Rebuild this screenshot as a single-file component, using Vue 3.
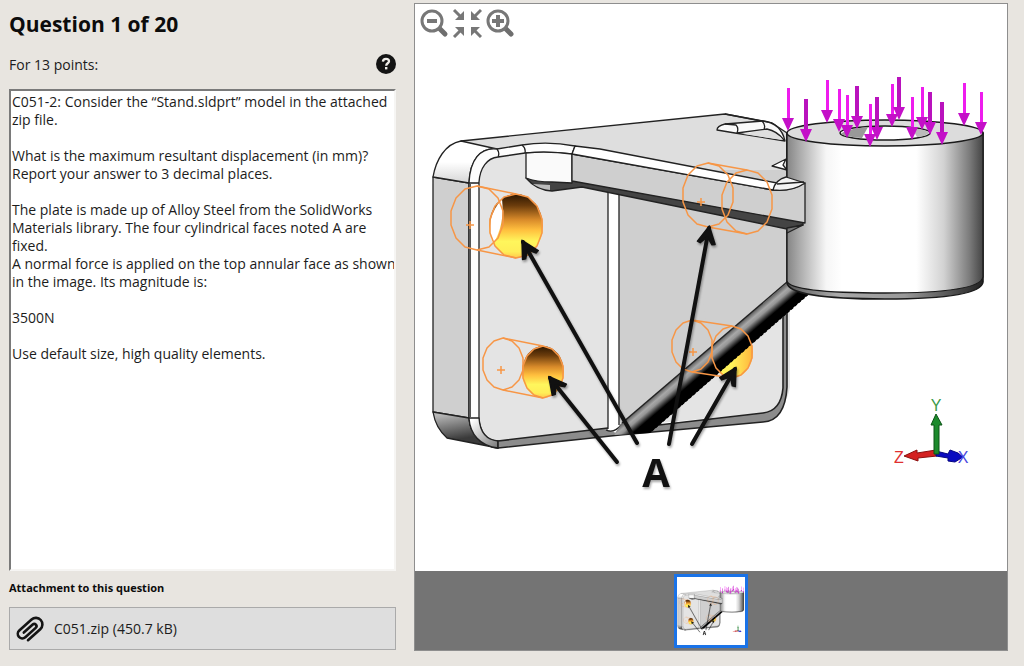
<script setup>
import { computed, ref } from 'vue'

const question = {
  number: 1,
  total: 20,
  points: 13,
  text: [
    'C051-2: Consider the “Stand.sldprt” model in the attached',
    'zip file.',
    '',
    'What is the maximum resultant displacement (in mm)?',
    'Report your answer to 3 decimal places.',
    '',
    'The plate is made up of Alloy Steel from the SolidWorks',
    'Materials library. The four cylindrical faces noted A are',
    'fixed.',
    'A normal force is applied on the top annular face as shown',
    'in the image. Its magnitude is:',
    '',
    '3500N',
    '',
    'Use default size, high quality elements.',
  ].join('\n'),
  attachment: 'C051.zip (450.7 kB)',
}

// x, top of the shaft, drawn in the darker shade
const forces = [
  [827, 80, false],
  [964, 83, false],
  [892, 84, false],
  [899, 77, true],
  [857, 86, true],
  [788, 88, false],
  [839, 89, false],
  [922, 87, false],
  [847, 95, false],
  [930, 92, true],
  [981, 92, false],
  [912, 97, false],
  [877, 97, true],
  [806, 99, true],
  [942, 102, true],
  [870, 104, false],
]

// wireframe cylinders: back centre, front centre, radii, cross
const fixtures = [
  { back: [477, 218], front: [516, 226], rx: 27, ry: 32, cross: [470, 225] },
  { back: [503, 364], front: [543, 372], rx: 21, ry: 26, cross: [501, 370] },
  { back: [708, 195], front: [747, 202], rx: 26, ry: 32, cross: [701, 202] },
  { back: [692, 346], front: [732, 352], rx: 21, ry: 26, cross: [693, 352] },
]

const callouts = [
  [637, 443, 523, 242],
  [617, 462, 550, 378],
  [669, 444, 709, 228],
  [692, 444, 735, 369],
]

function ring([cx, cy], rx, ry) {
  const points = []
  for (let i = 0; i < 14; i++) {
    const a = (i / 14) * Math.PI * 2 - Math.PI / 2
    points.push(`${Math.round(cx + rx * Math.cos(a))},${Math.round(cy + ry * Math.sin(a))}`)
  }
  return points.join(' ')
}

const scale = ref(1)
const viewBox = computed(() => {
  const w = 592 / scale.value
  const h = 567 / scale.value
  return `${711 - w / 2} ${287.5 - h / 2} ${w} ${h}`
})

function zoom(factor) {
  scale.value = Math.min(4, Math.max(0.5, scale.value * factor))
}
</script>

<template>
  <main class="page">
    <section class="question">
      <h1>Question {{ question.number }} of {{ question.total }}</h1>
      <div class="points">
        <label for="question-text">For {{ question.points }} points:</label>
        <button type="button" class="help" aria-label="Help">
          <svg viewBox="0 0 20 20" width="20" height="20">
            <circle cx="10" cy="10" r="10" fill="#141414" />
            <path
              d="M6.900 7.600C7 5.700 8.200 4.800 10 4.800S13 5.800 13 7.300C13 9.300 10.200 9.300 10.200 11.700"
              fill="none"
              stroke="#f0eeea"
              stroke-width="2.300"
            />
            <rect x="9" y="13" width="2.400" height="2.400" fill="#f0eeea" />
          </svg>
        </button>
      </div>
      <textarea id="question-text" class="text" readonly :value="question.text"></textarea>
      <h2>Attachment to this question</h2>
      <button type="button" class="attachment">
        <svg viewBox="0 0 30 30" width="30" height="30">
          <path
            d="M22 24V7.500A6.500 6.500 0 0 0 9 7.500V24A4.500 4.500 0 0 0 18 24V10A2 2 0 0 0 13.500 10V22"
            transform="rotate(48 15 15)"
            fill="none"
            stroke="#141414"
            stroke-width="2.600"
            stroke-linecap="round"
          />
        </svg>
        <span>{{ question.attachment }}</span>
      </button>
    </section>

    <section class="viewer">
      <div class="stage">
        <svg class="drawing" :viewBox="viewBox" role="img" aria-label="Stand model with loads and fixtures">
          <defs>
            <linearGradient id="barrel">
              <stop offset="0" stop-color="#858585" />
              <stop offset="0.060" stop-color="#a8a8a8" />
              <stop offset="0.200" stop-color="#f6f6f6" />
              <stop offset="0.280" stop-color="#fff" />
              <stop offset="0.660" stop-color="#fff" />
              <stop offset="0.800" stop-color="#d2d2d2" />
              <stop offset="0.930" stop-color="#7c7c7c" />
              <stop offset="1" stop-color="#444" />
            </linearGradient>
            <linearGradient id="barrel-foot">
              <stop offset="0" stop-color="#555" />
              <stop offset="0.250" stop-color="#aaa" />
              <stop offset="0.600" stop-color="#999" />
              <stop offset="1" stop-color="#222" />
            </linearGradient>
            <linearGradient id="bore" x1="0" y1="0" x2="0" y2="1">
              <stop offset="0" stop-color="#2c1600" />
              <stop offset="0.180" stop-color="#6b3c0c" />
              <stop offset="0.400" stop-color="#d88a2a" />
              <stop offset="0.560" stop-color="#ffbf3e" />
              <stop offset="0.740" stop-color="#fff65c" />
              <stop offset="0.900" stop-color="#ffee58" />
              <stop offset="1" stop-color="#ffc84a" />
            </linearGradient>
            <linearGradient id="bore-lit">
              <stop offset="0.500" stop-color="#fff35a" />
              <stop offset="1" stop-color="#ffb43c" />
            </linearGradient>
            <linearGradient id="corner-top" x1="0" y1="0" x2="0" y2="1">
              <stop offset="0.500" stop-color="#fff" />
              <stop offset="1" stop-color="#d6d6d6" />
            </linearGradient>
            <linearGradient id="corner-foot" x1="0" y1="0" x2="0.300" y2="1">
              <stop offset="0.100" stop-color="#b8b8b8" />
              <stop offset="0.800" stop-color="#3a3a3a" />
            </linearGradient>
            <linearGradient id="rim" x1="0" y1="0" x2="1" y2="1">
              <stop offset="0.100" stop-color="#fff" />
              <stop offset="1" stop-color="#777" />
            </linearGradient>
            <linearGradient id="strut" gradientUnits="userSpaceOnUse" x1="700" y1="356" x2="717" y2="376">
              <stop offset="0" stop-color="#555" />
              <stop offset="0.200" stop-color="#a8a8a8" />
              <stop offset="0.320" stop-color="#959595" />
              <stop offset="0.520" stop-color="#222" />
              <stop offset="0.580" stop-color="#000" />
            </linearGradient>
            <marker
              id="callout-head"
              markerUnits="userSpaceOnUse"
              viewBox="-20 -11 22 22"
              markerWidth="22"
              markerHeight="22"
              refX="-2"
              refY="0"
              orient="auto"
            >
              <path d="M0 0L-17 -9L-18 -6L-11 0L-18 6L-17 9Z" fill="#111" stroke="#111" stroke-width="1.500" stroke-linejoin="round" />
            </marker>
          </defs>

          <g id="stand" stroke-linejoin="round">
            <!-- plate -->
            <g stroke="#222" stroke-width="1.300">
              <path d="M461 141L725 114L772 123L787 133V390L620 420L480 180Z" fill="#dedede" />
              <path d="M433 177L469 183V418L433 412Z" fill="#cfcfcf" />
              <path d="M433 177C436 160 445 144 461 141L497 149C480 147 470 160 469 183Z" fill="url(#corner-top)" />
              <path d="M433 412L469 418C470 433 480 445 498 448L447 438C439 431 435 424 433 412Z" fill="url(#corner-foot)" />
              <path
                d="M479 418V182C480 168 488 158 498 157L525 153H572L790 190V387C787 404 779 412 763 413L608 428L498 441C487 440 480 433 479 418Z"
                fill="#e4e4e4"
                stroke="none"
              />
              <path d="M619 170H787V283L620 424Z" fill="#cfcfcf" stroke="none" />
              <path
                d="M469 183C470 160 480 147 497 149L522 145Q548 141 575 146L572 154Q548 151 525 153L498 157C487 158 480 168 479 182V418C480 433 487 440 498 441V448C480 446 470 434 469 418Z"
                fill="#fdfdfd"
              />
              <path d="M469 418H479C480 433 487 440 498 441V448C480 446 470 434 469 418Z" fill="url(#rim)" />
              <path d="M498 441L608 428L650 426L763 413Q781 411 783 388V310H787V387Q785 421 763 422L620 435L498 448Z" fill="#8c8c8c" stroke-width="1.600" />
              <path d="M608 188V430L619 434V189Z" fill="#fff" stroke="none" />
              <path d="M608 188V429M619 189V425M469 183H479M497 149Q500 153 498 157" fill="none" />
              <path d="M470 184V417" stroke="#555" stroke-width="2" />
              <path d="M606 430Q614 434 622 424" fill="none" />
            </g>

            <!-- pocket and slot on the upper face -->
            <g stroke="#222" stroke-width="1.300">
              <path d="M717 130Q717 126 725 124L763 121Q781 123 785 141L735 133Z" fill="#fafafa" />
              <path d="M743 134L767 129Q775 131 782 140Z" fill="#dedede" stroke="none" />
              <path d="M725 124L736 125Q739 128 737 133L767 129Q777 131 784 140M762 121Q766 125 764 129M725 114L768 122" fill="none" />
              <path d="M772 166L786 159L783 165L787 170Z" fill="#fff" />
            </g>

            <!-- bores -->
            <ellipse cx="732" cy="352" rx="21" ry="26" fill="url(#bore-lit)" />
            <path d="M700 283H787L732 352L711 360Z" fill="#cfcfcf" />
            <ellipse cx="516" cy="226" rx="27" ry="32" fill="url(#bore)" />
            <path d="M502 199Q505 225 493 244Q484 219 502 199Z" fill="#fff" />
            <ellipse cx="543" cy="372" rx="21" ry="26" fill="url(#bore)" />

            <!-- strut -->
            <path d="M787 283L621 424L614 435L650 433L810 293Z" fill="url(#strut)" />
            <path d="M787 282L622 423" stroke="#222" stroke-width="1.500" />
            <path d="M808 294L650 432" stroke="#000" stroke-width="2" stroke-dasharray="3 2" />

            <!-- barrel -->
            <path d="M787 133V283Q790 299 885 299Q981 299 983 282V133Z" fill="url(#barrel-foot)" stroke="#1a1a1a" stroke-width="1.600" />
            <path d="M787 133V281Q790 293 885 293Q980 293 983 277V133Z" fill="url(#barrel)" stroke="#1a1a1a" stroke-width="1.300" />
            <ellipse cx="885" cy="133" rx="98" ry="13" fill="#dcdcdc" stroke="#1a1a1a" stroke-width="1.500" />
            <ellipse cx="885" cy="133" rx="45" ry="7" fill="#fff" stroke="#1a1a1a" stroke-width="1.500" />
            <path d="M841 134Q845 129 868 127L862 138Q848 137 841 134Z" fill="#999" />
            <path d="M912 128Q928 130 929 133Q924 137 917 137Z" fill="#bbb" />

            <!-- arm -->
            <g stroke="#222" stroke-width="1.300">
              <path d="M526 178Q536 190 552 191L582 187L787 229L803 225V220L572 177Z" fill="#444" />
              <path d="M533 184L550 185V190Q540 189 533 184Z" fill="#bbb" stroke="none" />
              <path d="M526 153Q548 151 572 154V183L552 182Q536 182 526 178Z" fill="#fafafa" />
              <path d="M572 154L773 190Q790 192 805 183V223L572 181Z" fill="#cfcfcf" />
              <path d="M575 146L600 149L777 183L773 190L572 154Z" fill="#fff" />
              <path d="M773 190Q775 180 786 177L805 183Q792 192 773 190Z" fill="#f4f4f4" />
              <path d="M522 145Q526 148 525 153M777 184L804 182" fill="none" />
              <path d="M787 233L803 225L787 228Z" fill="#777" />
            </g>

            <!-- fixtures -->
            <g fill="none" stroke="#f79646" stroke-width="1.500">
              <template v-for="f in fixtures" :key="f.cross.join()">
                <polygon :points="ring(f.back, f.rx, f.ry)" />
                <polygon :points="ring(f.front, f.rx, f.ry)" />
                <path
                  :d="`M${f.back[0]} ${f.back[1] - f.ry}L${f.front[0]} ${f.front[1] - f.ry}M${f.back[0]} ${f.back[1] + f.ry}L${f.front[0]} ${f.front[1] + f.ry}`"
                />
                <path :d="`M${f.cross[0] - 4} ${f.cross[1]}h8m-4 -4v8`" />
              </template>
            </g>

            <!-- loads -->
            <g v-for="[x, y, dark] in forces" :key="x" :fill="dark ? '#b912bd' : '#ee1cee'">
              <rect :x="dark ? x - 2 : x - 1" :y="y" :width="dark ? 4 : 3" height="32" />
              <path :d="`M${x - 6} ${y + 30}h12l-6 13z`" fill="#c410c8" />
            </g>

            <!-- callouts -->
            <g class="callouts">
              <line
                v-for="[x1, y1, x2, y2] in callouts"
                :key="x1"
                :x1="x1"
                :y1="y1"
                :x2="x2"
                :y2="y2"
                stroke="#111"
                stroke-width="4"
                stroke-linecap="round"
                marker-end="url(#callout-head)"
              />
              <text x="656" y="487" text-anchor="middle" class="callout-label">A</text>
            </g>

            <!-- triad -->
            <g class="triad">
              <path d="M936 450L917 453V450L904 456L918 461V458L937 456Z" fill="#d42020" stroke="#8c1010" />
              <path d="M936 451L948 454L950 450L958 453L963 457L955 462L948 461V458L936 456Z" fill="#0a0ac0" stroke="#060680" />
              <path d="M934 454V425H931L936 414L942 425H939V454Z" fill="#1c8a2c" stroke="#0c5416" />
              <text x="936" y="411" fill="#3a9a48">Y</text>
              <text x="899" y="463" fill="#e03030">Z</text>
              <text x="963" y="463" fill="#4848e0">X</text>
            </g>
          </g>
        </svg>

        <div class="tools">
          <button type="button" aria-label="Zoom out" @click="zoom(0.8)">
            <svg viewBox="0 0 30 30" width="30" height="30">
              <path d="M20 20L26 26" stroke="#6e6e6e" stroke-width="5" stroke-linecap="round" />
              <circle cx="13" cy="13" r="10" fill="#fff" stroke="#777" stroke-width="3" />
              <path d="M8 13H18" stroke="#777" stroke-width="4" />
            </svg>
          </button>
          <button type="button" aria-label="Fit to window" @click="scale = 1">
            <svg viewBox="0 0 30 30" width="30" height="30">
              <g id="fit-arrow" fill="#777" stroke="#777">
                <path d="M2 2L9 9" stroke-width="3" />
                <path d="M12 3V12H3Z" stroke="none" />
              </g>
              <use href="#fit-arrow" transform="matrix(-1 0 0 1 31 0)" />
              <use href="#fit-arrow" transform="matrix(1 0 0 -1 0 31)" />
              <use href="#fit-arrow" transform="matrix(-1 0 0 -1 31 31)" />
            </svg>
          </button>
          <button type="button" aria-label="Zoom in" @click="zoom(1.25)">
            <svg viewBox="0 0 30 30" width="30" height="30">
              <path d="M20 20L26 26" stroke="#6e6e6e" stroke-width="5" stroke-linecap="round" />
              <circle cx="13" cy="13" r="10" fill="#fff" stroke="#777" stroke-width="3" />
              <path d="M7 13H19M13 7V19" stroke="#777" stroke-width="4" />
            </svg>
          </button>
        </div>
      </div>

      <div class="thumbs">
        <button type="button" class="thumb" aria-label="Image 1">
          <svg viewBox="415 4 592 567" preserveAspectRatio="xMidYMid slice">
            <use href="#stand" />
          </svg>
        </button>
      </div>
    </section>
  </main>
</template>

<style>
body {
  background: #e8e5e0;
}
</style>

<style scoped>
.page {
  display: grid;
  grid-template-columns: 43fr 66fr;
  gap: 18px;
  box-sizing: border-box;
  min-height: 100vh;
  padding: 3px 16px 16px 9px;
  background: #e8e5e0;
  color: #1c1c1c;
  font-family: 'Open Sans', 'Noto Sans', sans-serif;
  font-size: 14px;
}

button {
  font: inherit;
  color: inherit;
  padding: 0;
  border: 0;
  background: none;
  cursor: pointer;
}

svg {
  display: block;
}

.question {
  display: flex;
  flex-direction: column;
  min-width: 0;
  padding-bottom: 1px;
}

h1 {
  margin: 0;
  font-size: 21px;
  line-height: 42px;
  color: #0c0c0c;
}

.points {
  display: flex;
  align-items: center;
  justify-content: space-between;
  height: 24px;
  margin: 7px 0 13px;
}

.text {
  flex: 1;
  box-sizing: border-box;
  width: 100%;
  margin: 0;
  padding: 2px 1px;
  border: 2px solid;
  border-color: #7a7a7a #f6f5f3 #f6f5f3 #7a7a7a;
  border-radius: 0;
  outline: none;
  resize: none;
  overflow: hidden;
  background: #fff;
  color: inherit;
  font: inherit;
  line-height: 18px;
  white-space: pre;
}

h2 {
  margin: 9px 0 11px;
  font-size: 11px;
  line-height: 16px;
  color: #0c0c0c;
}

.attachment {
  display: flex;
  align-items: center;
  gap: 9px;
  height: 43px;
  padding: 0 5px;
  border: 1px solid #aaa;
  background: #dedede;
  text-align: left;
}

.viewer {
  display: flex;
  flex-direction: column;
  min-width: 0;
  border: 1px solid #8e8e8e;
  background: #fff;
}

.stage {
  position: relative;
  display: flex;
  flex: 1;
}

.drawing {
  flex: 1;
  width: 100%;
}

.tools {
  position: absolute;
  top: 4px;
  left: 4px;
  display: flex;
  gap: 3px;
}

.callouts {
  filter: drop-shadow(1px 2px 1px rgba(0, 0, 0, 0.35));
}

.callout-label {
  fill: #111;
  font-family: 'Open Sans', sans-serif;
  font-size: 40px;
  font-weight: 700;
}

.triad text {
  font-family: 'Liberation Sans', sans-serif;
  font-size: 16px;
  text-anchor: middle;
}

.thumbs {
  display: flex;
  justify-content: center;
  padding: 3px 0 2px;
  background: #747474;
}

.thumb {
  box-sizing: border-box;
  width: 74px;
  height: 74px;
  border: 3px solid #1a73e8;
  background: #fff;
}

.thumb svg {
  width: 100%;
  height: 100%;
}
</style>
